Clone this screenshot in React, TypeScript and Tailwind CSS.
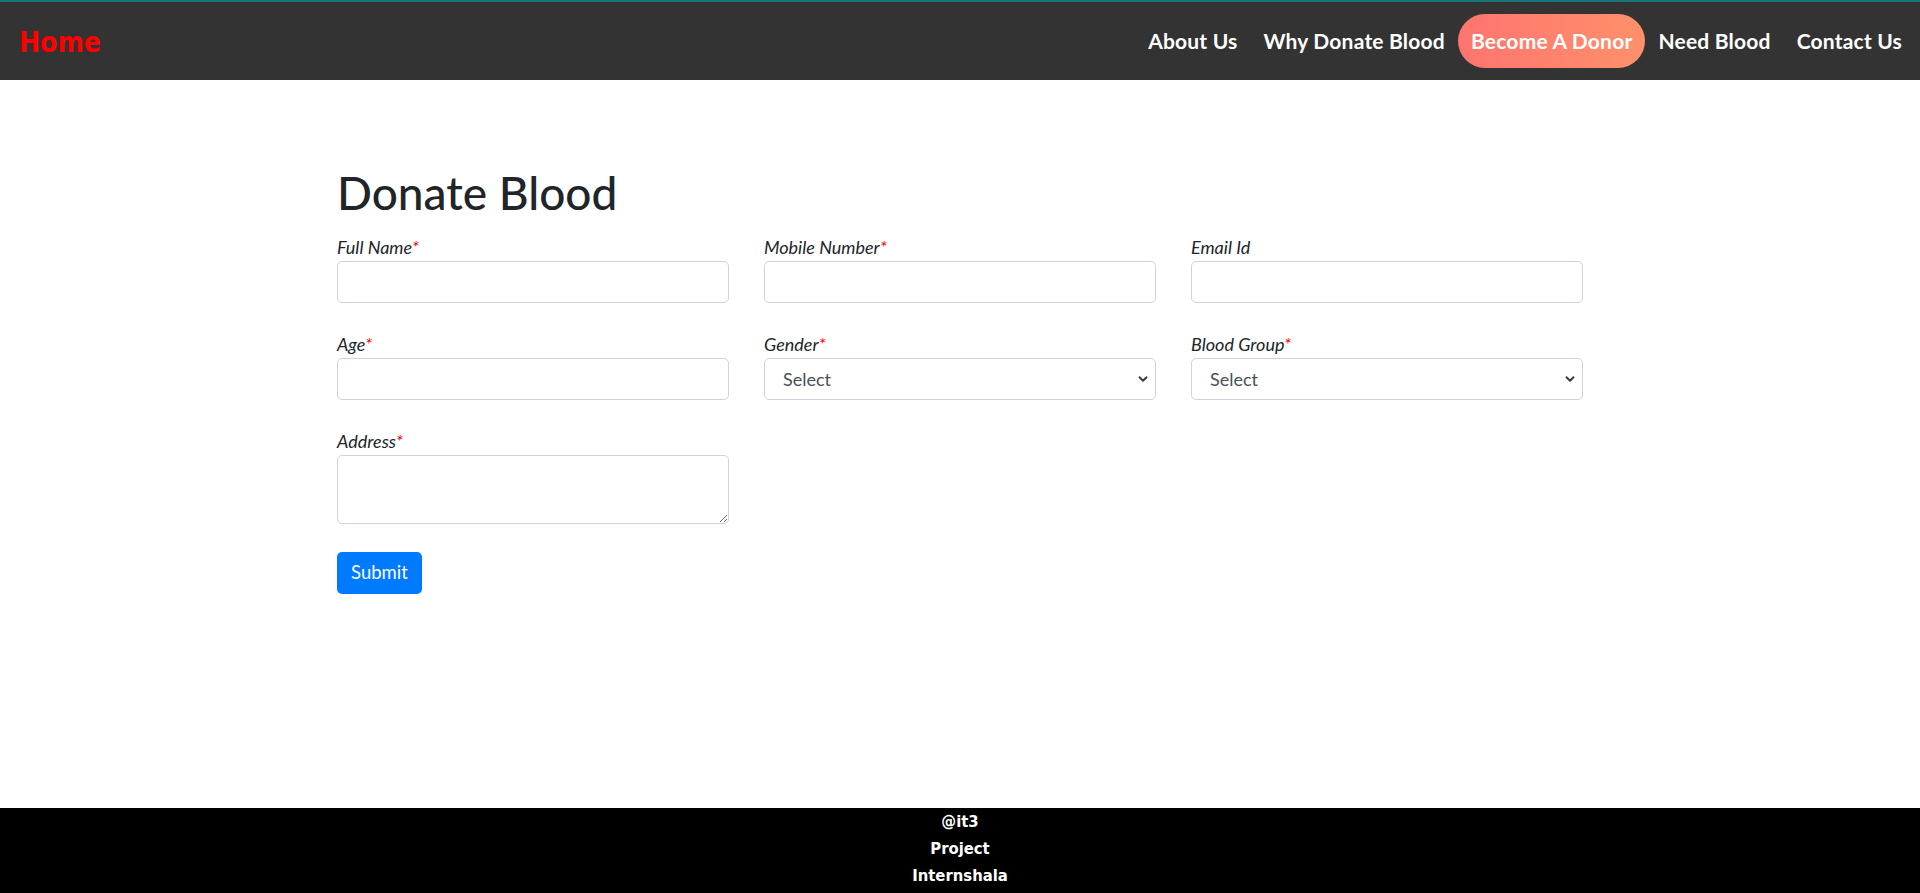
import { ChevronDown } from "lucide-react";

const navLinks = [
  { title: "About Us", active: false },
  { title: "Why Donate Blood", active: false },
  { title: "Become A Donor", active: true },
  { title: "Need Blood", active: false },
  { title: "Contact Us", active: false },
];

function Label({ text, required }: { text: string; required?: boolean }) {
  return (
    <label className="block italic text-[18px] leading-[27px] text-[#212529]">
      {text}
      {required && <span className="text-[#ff0000]">*</span>}
    </label>
  );
}

function Select() {
  return (
    <div className="relative">
      <select className="w-full h-[42px] appearance-none rounded-[5px] border border-[#ced4da] bg-white pl-[18px] pr-8 text-[18px] text-[#495057] outline-none">
        <option>Select</option>
      </select>
      <ChevronDown
        size={14}
        strokeWidth={3.2}
        color="#343a40"
        className="pointer-events-none absolute right-[6px] top-[14px]"
      />
    </div>
  );
}

export default function App() {
  return (
    <div className="min-h-screen flex flex-col bg-white font-['Lato',sans-serif]">
      <nav className="h-[80px] flex items-center justify-between bg-[#333333] border-t-2 border-[#17737a] pl-[19px] pr-[5px]">
        <a className="text-[#ff0000] font-bold text-[28px] leading-none font-['DejaVu_Sans_Condensed','DejaVu_Sans',sans-serif] pt-[3px]">
          Home
        </a>
        <div className="flex items-center">
          {navLinks.map((link) => (
            <a
              key={link.title}
              className={`h-[54px] flex items-center px-[13px] text-white font-bold text-[21px] tracking-[0.2px] ${
                link.active
                  ? "rounded-full bg-gradient-to-r from-[#ff746f] to-[#ff906a]"
                  : ""
              }`}
            >
              {link.title}
            </a>
          ))}
        </div>
      </nav>

      <main className="flex-1">
        <div className="w-[1246px] mx-auto pt-[85px]">
          <h1 className="text-[46px] leading-[1.2] font-medium text-[#212529] mb-[14px]">
            Donate Blood
          </h1>
          <form className="grid grid-cols-3 gap-x-[35px] gap-y-[28px]">
            <div>
              <Label text="Full Name" required />
              <input className="w-full h-[42px] rounded-[5px] border border-[#ced4da] px-3 outline-none" />
            </div>
            <div>
              <Label text="Mobile Number" required />
              <input className="w-full h-[42px] rounded-[5px] border border-[#ced4da] px-3 outline-none" />
            </div>
            <div>
              <Label text="Email Id" />
              <input className="w-full h-[42px] rounded-[5px] border border-[#ced4da] px-3 outline-none" />
            </div>
            <div>
              <Label text="Age" required />
              <input className="w-full h-[42px] rounded-[5px] border border-[#ced4da] px-3 outline-none" />
            </div>
            <div>
              <Label text="Gender" required />
              <Select />
            </div>
            <div>
              <Label text="Blood Group" required />
              <Select />
            </div>
            <div>
              <Label text="Address" required />
              <textarea className="block w-full h-[69px] rounded-[5px] border border-[#ced4da] px-3 outline-none" />
            </div>
            <div className="col-span-3">
              <button
                type="button"
                className="h-[42px] w-[85px] rounded-[5px] bg-[#007bff] text-white text-[18.5px]"
              >
                Submit
              </button>
            </div>
          </form>
        </div>
      </main>

      <footer className="h-[85px] bg-black text-white text-center font-bold text-[16.5px] leading-[27px] font-['DejaVu_Sans_Condensed','DejaVu_Sans',sans-serif]">
        <p>@it3</p>
        <p>Project</p>
        <p>Internshala</p>
      </footer>
    </div>
  );
}
